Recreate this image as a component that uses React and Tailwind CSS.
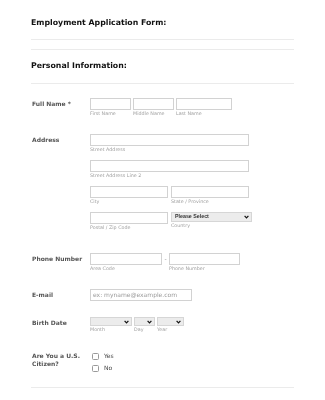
import React from "react";

const FONT = { fontFamily: '"DejaVu Sans", Verdana, sans-serif' };

function Box({ w, children }) {
  return (
    <div className={`h-[12px] border border-[#d2d2d2] bg-white ${w}`}>{children}</div>
  );
}

function Sub({ children }) {
  return (
    <div className="mt-[1px] h-[6px] text-[4.8px] leading-[6px] text-[#a0a0a0] whitespace-nowrap">
      {children}
    </div>
  );
}

function Chevron() {
  return (
    <svg width="5" height="4" viewBox="0 0 5 4" className="shrink-0">
      <path d="M0.6 0.8 L2.5 2.9 L4.4 0.8" fill="none" stroke="#111" strokeWidth="1.2" />
    </svg>
  );
}

function Select({ w, h, children }) {
  return (
    <div
      className={`${w} ${h} flex items-center justify-between border border-[#d6d6d6] bg-[#ececec] pl-[3px] pr-[2px]`}
    >
      <span
        className="text-[5.3px] font-bold leading-none text-[#333] whitespace-nowrap"
        style={{ fontFamily: '"Liberation Sans", Arial, sans-serif' }}
      >
        {children}
      </span>
      <Chevron />
    </div>
  );
}

function Row({ label, children, className = "", top = false }) {
  return (
    <div className={`flex ${className}`}>
      <div
        className={`w-[59px] shrink-0 pl-[1px] text-[6px] font-bold text-[#555] ${
          top ? "leading-[8px]" : "h-[12px] flex items-center leading-none"
        }`}
      >
        {label}
      </div>
      <div>{children}</div>
    </div>
  );
}

function Check({ label, className = "" }) {
  return (
    <div className={`flex h-[7px] items-center ${className}`}>
      <div className="ml-[2px] h-[7px] w-[7px] rounded-[1.5px] border border-[#9a9a9a] bg-white" />
      <span className="ml-[5px] -mt-[2px] text-[6px] leading-none text-[#444]">{label}</span>
    </div>
  );
}

export default function App() {
  return (
    <div className="min-h-[400px] w-[325px] bg-white">
      <div className="w-[294px] pl-[31px] pt-[18px] will-change-transform antialiased" style={FONT}>
        <h1 className="text-[7.8px] font-bold leading-[10px] text-[#111]">
          Employment Application Form:
        </h1>
        <div className="mt-[11px] h-px bg-[#ebebeb]" />
        <div className="mt-[9px] h-px bg-[#ebebeb]" />
        <h2 className="mt-[11px] text-[7.8px] font-bold leading-[10px] text-[#111]">
          Personal Information:
        </h2>
        <div className="mt-[12px] h-px bg-[#ebebeb]" />

        <Row label="Full Name *" className="mt-[14px]">
          <div className="flex gap-[2px]">
            <div>
              <Box w="w-[41px]" />
              <Sub>First Name</Sub>
            </div>
            <div>
              <Box w="w-[41px]" />
              <Sub>Middle Name</Sub>
            </div>
            <div>
              <Box w="w-[56px]" />
              <Sub>Last Name</Sub>
            </div>
          </div>
        </Row>

        <Row label="Address" className="mt-[17px]">
          <div>
            <Box w="w-[159px]" />
            <Sub>Street Address</Sub>
          </div>
          <div className="mt-[7px]">
            <Box w="w-[159px]" />
            <Sub>Street Address Line 2</Sub>
          </div>
          <div className="mt-[7px] flex gap-[3px]">
            <div>
              <Box w="w-[78px]" />
              <Sub>City</Sub>
            </div>
            <div>
              <Box w="w-[78px]" />
              <Sub>State / Province</Sub>
            </div>
          </div>
          <div className="mt-[7px] flex gap-[3px]">
            <div>
              <Box w="w-[78px]" />
              <Sub>Postal / Zip Code</Sub>
            </div>
            <div>
              <Select w="w-[81px]" h="h-[10px]">Please Select</Select>
              <Sub>Country</Sub>
            </div>
          </div>
        </Row>

        <Row label="Phone Number" className="mt-[22px]">
          <div className="flex">
            <div>
              <Box w="w-[72px]" />
              <Sub>Area Code</Sub>
            </div>
            <div className="flex h-[12px] w-[7px] items-center justify-center text-[6px] leading-none text-[#999]">
              -
            </div>
            <div>
              <Box w="w-[71px]" />
              <Sub>Phone Number</Sub>
            </div>
          </div>
        </Row>

        <Row label="E-mail" className="mt-[17px]">
          <div className="flex h-[12px] w-[102px] items-center border border-[#d2d2d2] bg-white pl-[2px]">
            <span className="text-[6px] leading-none text-[#9a9a9a] whitespace-nowrap">
              ex: myname@example.com
            </span>
          </div>
        </Row>

        <Row label="Birth Date" className="mt-[16px]">
          <div className="flex gap-[2px]">
            <div>
              <Select w="w-[42px]" h="h-[9px]" />
              <Sub>Month</Sub>
            </div>
            <div>
              <Select w="w-[21px]" h="h-[9px]" />
              <Sub>Day</Sub>
            </div>
            <div>
              <Select w="w-[27px]" h="h-[9px]" />
              <Sub>Year</Sub>
            </div>
          </div>
        </Row>

        <Row label="Are You a U.S. Citizen?" className="mt-[19px]" top>
          <div className="pt-[1px]">
            <Check label="Yes" />
            <Check label="No" className="mt-[5px]" />
          </div>
        </Row>

        <div className="mt-[15px] h-px bg-[#ebebeb]" />
      </div>
    </div>
  );
}
